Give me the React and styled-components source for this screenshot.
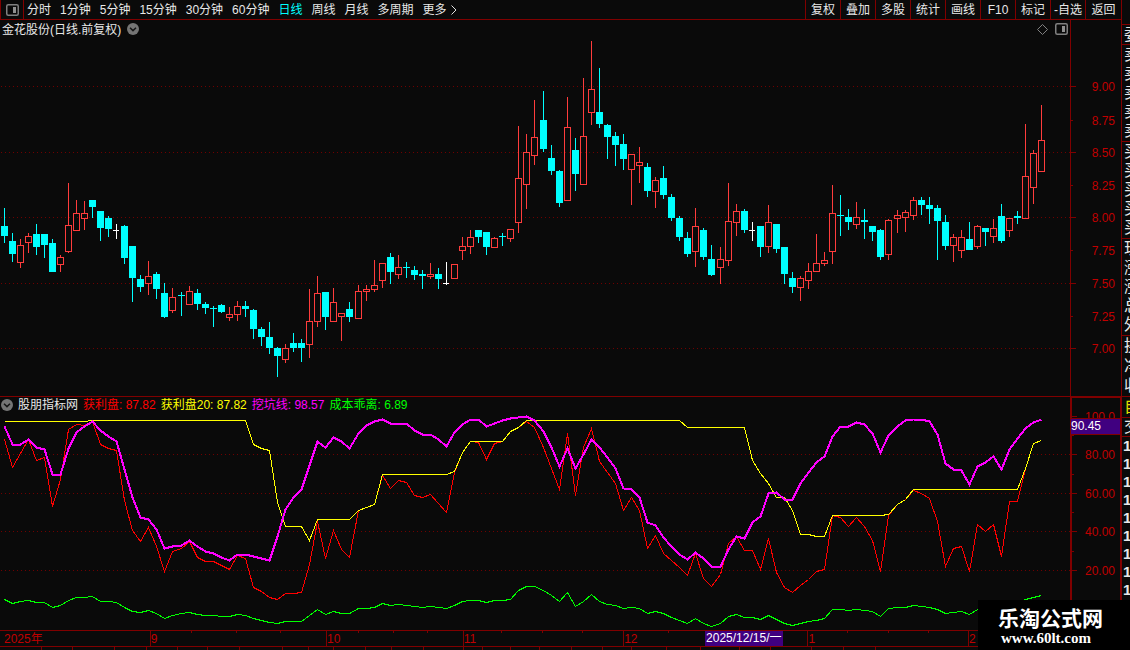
import React, { useState } from "react";
import styled, { createGlobalStyle } from "styled-components";

const LINE = "#800000";
const FONT = `"Liberation Sans", "Noto Sans CJK SC", sans-serif`;

const GlobalStyle = createGlobalStyle`
  * {
    box-sizing: border-box;
  }
  body {
    margin: 0;
    background: #0a0a0a;
    color: #e8e8e8;
    font-family: ${FONT};
    font-size: 12px;
  }
  button {
    margin: 0;
    padding: 0;
    border: none;
    background: none;
    color: inherit;
    font: inherit;
    white-space: nowrap;
    cursor: pointer;
  }
`;
const Page = styled.div`
  position: relative;
  display: grid;
  grid-template-columns: minmax(0, 1fr) 9px;
  height: 100vh;
  overflow: hidden;
`;
const Main = styled.main`
  display: grid;
  grid-template-rows: 20px minmax(0, 376fr) minmax(0, 234fr) 16px 4px;
  min-height: 0;
`;
const Toolbar = styled.nav`
  display: flex;
  justify-content: space-between;
  border-bottom: 1px solid ${LINE};
  line-height: 18px;
  overflow: hidden;
`;
const Periods = styled.div`
  display: flex;
  gap: 9px;
`;
const LayoutButton = styled.button`
  display: flex;
  align-items: center;
  justify-content: center;
  width: 24px;
  margin-right: -6px;
  border-left: 1px solid ${LINE};
  border-right: 1px solid ${LINE};
`;
const Period = styled.button`
  display: flex;
  align-items: center;
  gap: 4px;
  color: ${(props) => (props.$active ? "#00ffff" : "inherit")};
`;
const Tools = styled.div`
  display: flex;
`;
const Tool = styled.button`
  width: 35px;
  border-left: 1px solid ${LINE};
  &:last-child {
    width: 36px;
  }
`;
const Pane = styled.section`
  display: grid;
  grid-template-columns: minmax(0, 1fr) 51px;
  min-height: 0;
`;
const IndicatorPane = styled(Pane)`
  border-top: 1px solid ${LINE};
`;
const Plot = styled.div`
  display: flex;
  flex-direction: column;
  min-height: 0;
`;
const PriceHeader = styled.header`
  display: flex;
  align-items: center;
  gap: 6px;
  height: 18px;
  padding: 0 2px;
  line-height: 18px;
`;
const IndicatorHeader = styled.header`
  display: flex;
  align-items: center;
  gap: 5px;
  height: 16px;
  padding: 0 1px;
  line-height: 16px;
`;
const Title = styled.h1`
  margin: 0;
  padding-top: 2px;
  font-size: 12px;
  font-weight: 400;
`;
const RoundButton = styled.button`
  display: flex;
`;
const HeaderIcons = styled.div`
  display: flex;
  align-items: center;
  gap: 7px;
  margin-left: auto;
`;
const Value = styled.span`
  color: ${(props) => props.$color};
`;
const Chart = styled.svg`
  display: block;
  flex: 1;
  width: 100%;
  min-height: 0;
`;
const Axis = styled.div`
  border-left: 1px solid ${LINE};
  min-height: 0;
`;
const IndicatorAxis = styled(Axis)`
  position: relative;
  border: solid ${LINE};
  border-width: 1px 1px 0 2px;
`;
const Scale = styled.svg`
  display: block;
  width: 100%;
  height: 100%;
  font-family: ${FONT};
  font-size: 12px;
  fill: #c00000;
`;
const CursorValue = styled.div`
  position: absolute;
  left: -1px;
  right: 0;
  top: 20px;
  height: 17px;
  background: #400080;
  border: solid ${LINE};
  border-width: 1px 0;
  color: #ffffff;
  line-height: 15px;
`;
const TimeAxis = styled.div`
  position: relative;
  display: flex;
  padding-right: 51px;
  border-top: 1px solid ${LINE};
  color: #c00000;
  line-height: 16px;
`;
const Month = styled.div`
  flex: ${(props) => props.$span} 1 0;
  border-left: 1px solid ${LINE};
  &:first-child {
    border: none;
    padding-left: 4px;
  }
`;
const CursorDate = styled.div`
  position: absolute;
  left: 62.9%;
  top: 0;
  height: 15px;
  padding: 0 1px;
  background: #400080;
  color: #ffffff;
  line-height: 15px;
`;
const TickLayer = styled.svg`
  position: absolute;
  left: 0;
  top: 0;
  width: 100%;
  height: 2px;
`;
const BottomTabs = styled.div`
  display: flex;
  border-top: 1px solid ${LINE};
  overflow: hidden;
`;
const BottomTab = styled.div`
  flex: ${(props) => props.$span} 1 0;
  border-right: 1px solid ${LINE};
`;
const Side = styled.aside`
  display: grid;
  grid-template-rows: 25fr 20fr 97fr 97fr 97fr 61fr 21fr 19fr 213fr;
  min-height: 0;
  border-left: 1px solid ${LINE};
  overflow: hidden;
`;
const Group = styled.div`
  display: flex;
  flex-direction: column;
  justify-content: space-around;
  min-height: 0;
  padding-left: 2px;
  border-bottom: 1px solid ${LINE};
  color: ${(props) => props.$color || "inherit"};
  font-size: 16px;
  line-height: 18px;
`;
const Ticks = styled(Group)`
  justify-content: flex-start;
  padding-left: 1px;
  font-size: 15px;
  font-weight: 700;
`;
const Brand = styled.div`
  position: absolute;
  right: 0;
  bottom: 0;
  width: 152px;
  height: 50px;
  padding: 7px 0 0 20px;
  background: #000000;
  color: #ffffff;
`;
const BrandName = styled.div`
  font-size: 21px;
  font-weight: 700;
  line-height: 24px;
`;
const BrandUrl = styled.div`
  padding-left: 3px;
  font-family: "Liberation Serif", serif;
  font-size: 15px;
  font-weight: 700;
  line-height: 15px;
`;

// type, high, body top, body bottom, low (u = up, d = down, x = flat)
const candles = `
d 208 226 236 243,d 233 241 254 262,u 239 245 263 268,u 233 236 243 253,d 224 234 247 255,
d 234 234 245 258,d 239 243 272 272,u 255 257 265 272,u 183 225 252 253,u 200 213 231 231,
u 201 213 219 230,d 200 200 207 218,d 211 211 228 241,d 216 218 229 237,x 224 230 231 239,
d 225 226 258 264,d 246 246 278 302,d 275 279 287 292,u 261 276 284 295,d 272 274 289 299,
d 283 293 317 318,u 288 297 311 313,d 292 295 296 316,u 286 291 305 305,d 289 293 304 310,
d 302 304 308 314,d 306 308 309 327,d 304 305 312 313,u 307 314 318 321,u 301 306 315 321,
d 301 306 309 317,d 309 310 329 339,d 327 329 337 346,d 322 337 348 354,d 347 348 356 377,
u 344 348 360 363,d 333 343 348 352,d 339 343 348 362,u 289 321 345 358,u 276 293 322 327,
d 292 292 317 330,u 288 302 322 322,u 313 313 317 341,d 302 309 317 322,u 285 291 319 319,
u 285 289 292 301,u 260 285 290 292,u 263 263 281 288,d 253 257 272 284,u 255 267 275 279,
d 262 267 268 278,d 266 270 275 280,d 270 274 276 289,u 263 274 277 279,d 268 274 279 289,
x 262 283 284 285,u 264 264 279 279,u 237 246 251 260,u 230 237 247 254,d 230 230 237 243,
d 232 232 247 255,u 237 238 248 248,d 233 236 237 246,u 229 229 239 242,u 126 178 223 233,
u 134 152 185 209,u 100 137 156 165,d 91 120 149 152,d 145 158 171 175,d 170 171 203 207,
u 97 127 201 201,d 138 150 174 191,u 78 136 185 185,u 41 89 113 125,d 68 112 124 128,
d 124 125 137 159,d 132 136 145 166,d 134 144 159 170,u 154 154 170 205,u 147 162 166 183,
d 163 167 191 197,u 177 180 192 208,d 166 178 195 199,d 194 197 218 221,d 216 218 237 241,
d 232 238 254 257,u 208 226 252 267,d 228 230 257 260,d 245 259 275 276,u 247 259 268 284,
u 183 221 261 266,u 204 211 223 236,d 209 211 230 233,x 222 230 231 241,d 226 226 247 257,
u 205 222 247 253,d 224 224 249 253,d 247 247 274 284,d 272 278 287 293,u 276 278 288 301,
u 263 271 281 289,u 234 263 272 272,u 252 260 264 266,u 185 213 252 264,d 195 215 216 236,
d 209 217 222 230,u 202 217 225 229,d 209 220 222 239,d 226 226 232 241,d 229 230 257 260,
u 219 220 255 260,u 210 215 219 233,u 210 212 218 232,u 197 200 216 220,d 197 200 205 215,
d 197 205 209 224,d 205 208 221 260,d 215 222 246 250,u 234 237 246 262,u 230 237 251 258,
d 222 239 250 250,u 225 226 247 249,d 228 228 232 246,u 219 228 237 243,d 204 216 241 243,
u 218 218 231 237,d 211 216 218 224,u 124 176 219 219,u 150 153 188 204,u 105 140 172 172`
  .split(",")
  .map((row) => {
    const [type, ...values] = row.trim().split(" ");
    const [high, top, bottom, low] = values.map(Number);
    return { type, high, top, bottom, low };
  });

const repeat = (value, times) => Array(times).fill(value);

const profit = [
  439, 467, 453, 439, 460, 457, 506, 479, 429, 424, 425, 421, 444, 448, 450,
  500, 530, 541, 527, 546, 571, 551, 548, 541, 557, 561, 561, 565, 569, 555,
  558, 587, 591, 597, 599, 593, 593, 592, 564, 521, 558, 530, 549, 557, 510,
  507, 504, 475, 488, 480, 482, 495, 497, 494, 503, 512, 472, 452, 441, 442,
  459, 443, 441, 431, 427, 421, 427, 447, 468, 489, 433, 495, 447, 428, 461,
  472, 483, 510, 497, 510, 548, 535, 553, 560, 567, 575, 553, 578, 586, 574,
  543, 536, 550, 550, 569, 538, 572, 587, 592, 585, 579, 571, 569, 515, 517,
  526, 517, 526, 540, 571, 515, 504, 499, 490, 493, 498, 521, 566, 548, 546,
  571, 524, 531, 524, 556, 501, 501, 468, 443, 440,
];
const profit20 = [
  ...repeat(421, 11),
  ...repeat(420, 20),
  444, 448, 450, 502, 526, 526, 526, 540,
  ...repeat(519, 5),
  510, 507, 504,
  ...repeat(474, 9),
  471, 452,
  ...repeat(441, 5),
  431, 427,
  ...repeat(420, 20),
  ...repeat(427, 8),
  460, 473, 483, 497, 497, 510, 534, 534, 536, 536,
  ...repeat(515, 7),
  514, 504, 499,
  ...repeat(489, 14),
  468, 443, 440,
];
const pit = [
  426, 444, 444, 439, 447, 449, 474, 474, 448, 432, 426, 421, 430, 436, 441,
  469, 497, 517, 519, 529, 548, 546, 545, 540, 546, 551, 553, 557, 560, 554,
  554, 556, 558, 560, 536, 509, 497, 489, 465, 441, 447, 437, 441, 448, 433,
  425, 421, 419, 423, 423, 423, 430, 434, 434, 439, 446, 432, 424, 419, 419,
  426, 423, 420, 418, 417, 416, 420, 431, 447, 466, 448, 468, 454, 439, 447,
  457, 468, 488, 489, 497, 522, 525, 537, 546, 554, 559, 552, 558, 566, 566,
  549, 536, 538, 522, 516, 493, 492, 499, 499, 483, 472, 462, 456, 436, 426,
  426, 422, 424, 433, 452, 435, 426, 420, 419, 419, 421, 434, 463, 469, 470,
  484, 466, 462, 456, 469, 449, 438, 428, 422, 419,
];
const deviation = [
  599, 603, 601, 600, 602, 602, 607, 605, 600, 597, 597, 596, 601, 601, 602,
  607, 611, 612, 610, 613, 618, 615, 613, 612, 614, 615, 615, 616, 616, 614,
  615, 618, 620, 622, 623, 621, 621, 621, 615, 609, 614, 611, 613, 613, 608,
  608, 607, 603, 605, 604, 605, 606, 607, 606, 607, 608, 605, 601, 600, 600,
  602, 600, 600, 599, 590, 586, 586, 590, 595, 601, 592, 606, 601, 594, 601,
  604, 605, 608, 607, 608, 613, 611, 613, 617, 620, 623, 618, 623, 626, 623,
  616, 614, 617, 617, 619, 615, 619, 623, 625, 623, 621, 620, 618, 609, 609,
  610, 609, 610, 611, 616, 608, 607, 607, 605, 606, 607, 609, 613, 612, 611,
  614, 609, 608, 605, 610, 603, 602, 599, 597, 595,
];

const priceMarks = [
  ["9.00", 86], ["8.75", 120], ["8.50", 152], ["8.25", 185], ["8.00", 217],
  ["7.75", 250], ["7.50", 283], ["7.25", 316], ["7.00", 348],
];
const indicatorMarks = [
  ["100.0", 416], ["", 435], ["80.00", 454], ["", 474], ["60.00", 493],
  ["", 512], ["40.00", 531], ["", 551], ["20.00", 570],
];
const months = [
  ["2025年", 147], ["9", 177], ["10", 137], ["11", 161],
  ["12", 185], ["1", 161], ["2", 102],
];
const weekTicks = [191, 236, 280, 358, 393, 427, 501, 542, 582, 668, 847, 888, 928];
const tabs = [42, 31, 42, 32, 30, 30, 32, 43, 26, 24, 32, 26, 32, 40, 18, 28, 28, 32, 31, 29, 35, 33, 39, 31, 41, 32, 32, 250];
const periods = ["分时", "1分钟", "5分钟", "15分钟", "30分钟", "60分钟", "日线", "周线", "月线", "多周期", "更多"];
const tools = ["复权", "叠加", "多股", "统计", "画线", "F10", "标记", "-自选", "返回"];
const sideGroups = ["委", "卖卖卖卖卖", "买买买买买", "现涨涨总外", "换净收"];

// bars are a little over 8px apart
const barX = (i) => 4 + 8 * i + Math.floor(i * 0.0448 + 0.03);
const toPoints = (values) =>
  values.map((y, i) => `${barX(i) + 0.5},${y + 0.5}`).join(" ");

function PanelIcon() {
  return (
    <svg width="13" height="12" viewBox="0 0 13 12" fill="none">
      <rect x="0.75" y="0.75" width="11.5" height="10.5" rx="1.5" stroke="#808080" strokeWidth="1.5" />
      <rect x="7" y="3" width="3" height="6" fill="#909090" />
    </svg>
  );
}

function ChevronIcon() {
  return (
    <svg width="12" height="12" viewBox="0 0 12 12" fill="none">
      <circle cx="6" cy="6" r="6" fill="#757575" />
      <path d="M3 4.8 L6 7.6 L9 4.8" stroke="#161616" strokeWidth="1.5" />
    </svg>
  );
}

function GridLines({ rows }) {
  return rows.map((y) => (
    <line key={y} x1="1" x2="1070" y1={y + 0.5} y2={y + 0.5} stroke="#700000" strokeDasharray="1 3" />
  ));
}

function Candle({ x, type, high, top, bottom, low }) {
  if (type === "u") {
    return (
      <g fill="#ff3c3c">
        <rect x={x} y={high} width="1" height={top - high} />
        <rect x={x - 2.5} y={top + 0.5} width="6" height={bottom - top - 1} fill="none" stroke="#ff3c3c" />
        <rect x={x} y={bottom} width="1" height={low - bottom} />
      </g>
    );
  }
  const flat = type === "x";
  return (
    <g fill={flat ? "#ffffff" : "#00ffff"}>
      <rect x={x} y={high} width="1" height={low - high} />
      <rect x={x - 3} y={top} width={flat ? 6 : 7} height={bottom - top} />
    </g>
  );
}

function Marks({ marks, top, height, right }) {
  return (
    <Scale shapeRendering="crispEdges">
      {marks.map(([label, y], i) => (
        <g key={y}>
          <rect x="0" y={`${((y - top) / height) * 100}%`} width={i % 2 ? 2 : 5} height="1" fill={LINE} />
          {label && (
            <text x={right} y={`${((y - top) / height) * 100}%`} dy="5" textAnchor="end">
              {label}
            </text>
          )}
        </g>
      ))}
    </Scale>
  );
}

function WeekTicks() {
  return (
    <TickLayer viewBox="0 0 1121 2" preserveAspectRatio="none" shapeRendering="crispEdges">
      {weekTicks.map((x) => (
        <rect key={x} x={x} y="0" width="1" height="2" fill={LINE} />
      ))}
    </TickLayer>
  );
}

export default function App() {
  const [period, setPeriod] = useState("日线");

  return (
    <Page>
      <GlobalStyle />
      <Main>
        <Toolbar>
          <Periods>
            <LayoutButton aria-label="布局">
              <PanelIcon />
            </LayoutButton>
            {periods.map((name) => (
              <Period key={name} $active={name === period} onClick={() => setPeriod(name)}>
                {name}
                {name === "更多" && (
                  <svg width="6" height="10" viewBox="0 0 6 10" fill="none">
                    <path d="M0.5 0.5 L5 5 L0.5 9.5" stroke="#e0e0e0" />
                  </svg>
                )}
              </Period>
            ))}
          </Periods>
          <Tools>
            {tools.map((name) => (
              <Tool key={name}>{name}</Tool>
            ))}
          </Tools>
        </Toolbar>

        <Pane>
          <Plot>
            <PriceHeader>
              <Title>金花股份(日线.前复权)</Title>
              <RoundButton aria-label="展开">
                <ChevronIcon />
              </RoundButton>
              <HeaderIcons>
                <svg width="11" height="11" viewBox="0 0 11 11" fill="none">
                  <path d="M5.5 0.5 L10.5 5.5 L5.5 10.5 L0.5 5.5 Z" stroke="#808080" />
                </svg>
                <PanelIcon />
              </HeaderIcons>
            </PriceHeader>
            <Chart viewBox="0 38 1070 358" preserveAspectRatio="none" shapeRendering="crispEdges">
              <GridLines rows={[86, 152, 217, 283, 348]} />
              {candles.map((candle, i) => (
                <Candle key={i} x={barX(i)} {...candle} />
              ))}
            </Chart>
          </Plot>
          <Axis>
            <Marks marks={priceMarks} top={20} height={376} right={44} />
          </Axis>
        </Pane>

        <IndicatorPane>
          <Plot>
            <IndicatorHeader>
              <RoundButton aria-label="指标菜单">
                <ChevronIcon />
              </RoundButton>
              <Value $color="#e8e8e8">股朋指标网</Value>
              <Value $color="#ff0000">获利盘: 87.82</Value>
              <Value $color="#ffff00">获利盘20: 87.82</Value>
              <Value $color="#ff00ff">挖坑线: 98.57</Value>
              <Value $color="#00ff00">成本乖离: 6.89</Value>
            </IndicatorHeader>
            <Chart viewBox="0 413 1070 217" preserveAspectRatio="none" shapeRendering="crispEdges" fill="none">
              <GridLines rows={[454, 493, 531, 570]} />
              <polyline points={toPoints(profit)} stroke="#ff0000" />
              <polyline points={toPoints(profit20)} stroke="#ffff00" />
              <polyline points={toPoints(pit)} stroke="#ff00ff" strokeWidth="2" />
              <polyline points={toPoints(deviation)} stroke="#00ff00" />
            </Chart>
          </Plot>
          <IndicatorAxis>
            <Marks marks={indicatorMarks} top={398} height={232} right={43} />
            <CursorValue>90.45</CursorValue>
          </IndicatorAxis>
        </IndicatorPane>

        <TimeAxis>
          {months.map(([name, span]) => (
            <Month key={name} $span={span}>
              {name}
            </Month>
          ))}
          <WeekTicks />
          <CursorDate>2025/12/15/一</CursorDate>
        </TimeAxis>
        <BottomTabs>
          {tabs.map((span, i) => (
            <BottomTab key={i} $span={span} />
          ))}
        </BottomTabs>
      </Main>

      <Side>
        <Group />
        {sideGroups.map((chars) => (
          <Group key={chars}>
            {chars.split("").map((char, i) => (
              <span key={i}>{char}</span>
            ))}
          </Group>
        ))}
        <Group $color="#e0e000">自</Group>
        <Group>交</Group>
        <Ticks>
          {repeat("1", 9).map((n, i) => (
            <span key={i}>{n}</span>
          ))}
        </Ticks>
      </Side>

      <Brand>
        <BrandName>乐淘公式网</BrandName>
        <BrandUrl>www.60lt.com</BrandUrl>
      </Brand>
    </Page>
  );
}
